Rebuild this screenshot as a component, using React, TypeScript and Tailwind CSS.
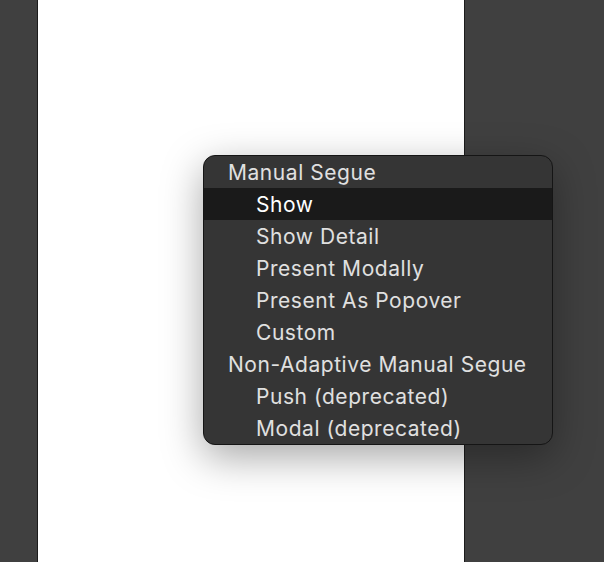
import React from 'react'

const items = [
  { label: 'Manual Segue', header: true },
  { label: 'Show', active: true },
  { label: 'Show Detail' },
  { label: 'Present Modally' },
  { label: 'Present As Popover' },
  { label: 'Custom' },
  { label: 'Non-Adaptive Manual Segue', header: true },
  { label: 'Push (deprecated)' },
  { label: 'Modal (deprecated)' },
]

const App = () => {
  return (
    <div className="relative w-[604px] h-[562px] overflow-hidden bg-[#404040] font-['Inter',sans-serif]">
      <div className="ml-[37px] w-[428px] h-full bg-white border-x border-[#1c1c1c]" />

      {/* context menu */}
      <div className="absolute left-[203px] top-[155px] w-[350px] rounded-[12px] border border-[#151515] bg-[#353535] overflow-hidden shadow-[0_12px_40px_rgba(0,0,0,0.35)]">
        {items.map((it) => (
          <div
            key={it.label}
            className={
              'h-8 pt-px flex items-center text-[21px] tracking-[0.55px] ' +
              (it.header ? 'pl-[24px] text-[#e0e0e0] ' : 'pl-[52px] ') +
              (it.active ? 'bg-[#1a1a1a] text-white' : it.header ? '' : 'text-[#e0e0e0]')
            }
          >
            {it.label}
          </div>
        ))}
      </div>
    </div>
  )
}

export default App
